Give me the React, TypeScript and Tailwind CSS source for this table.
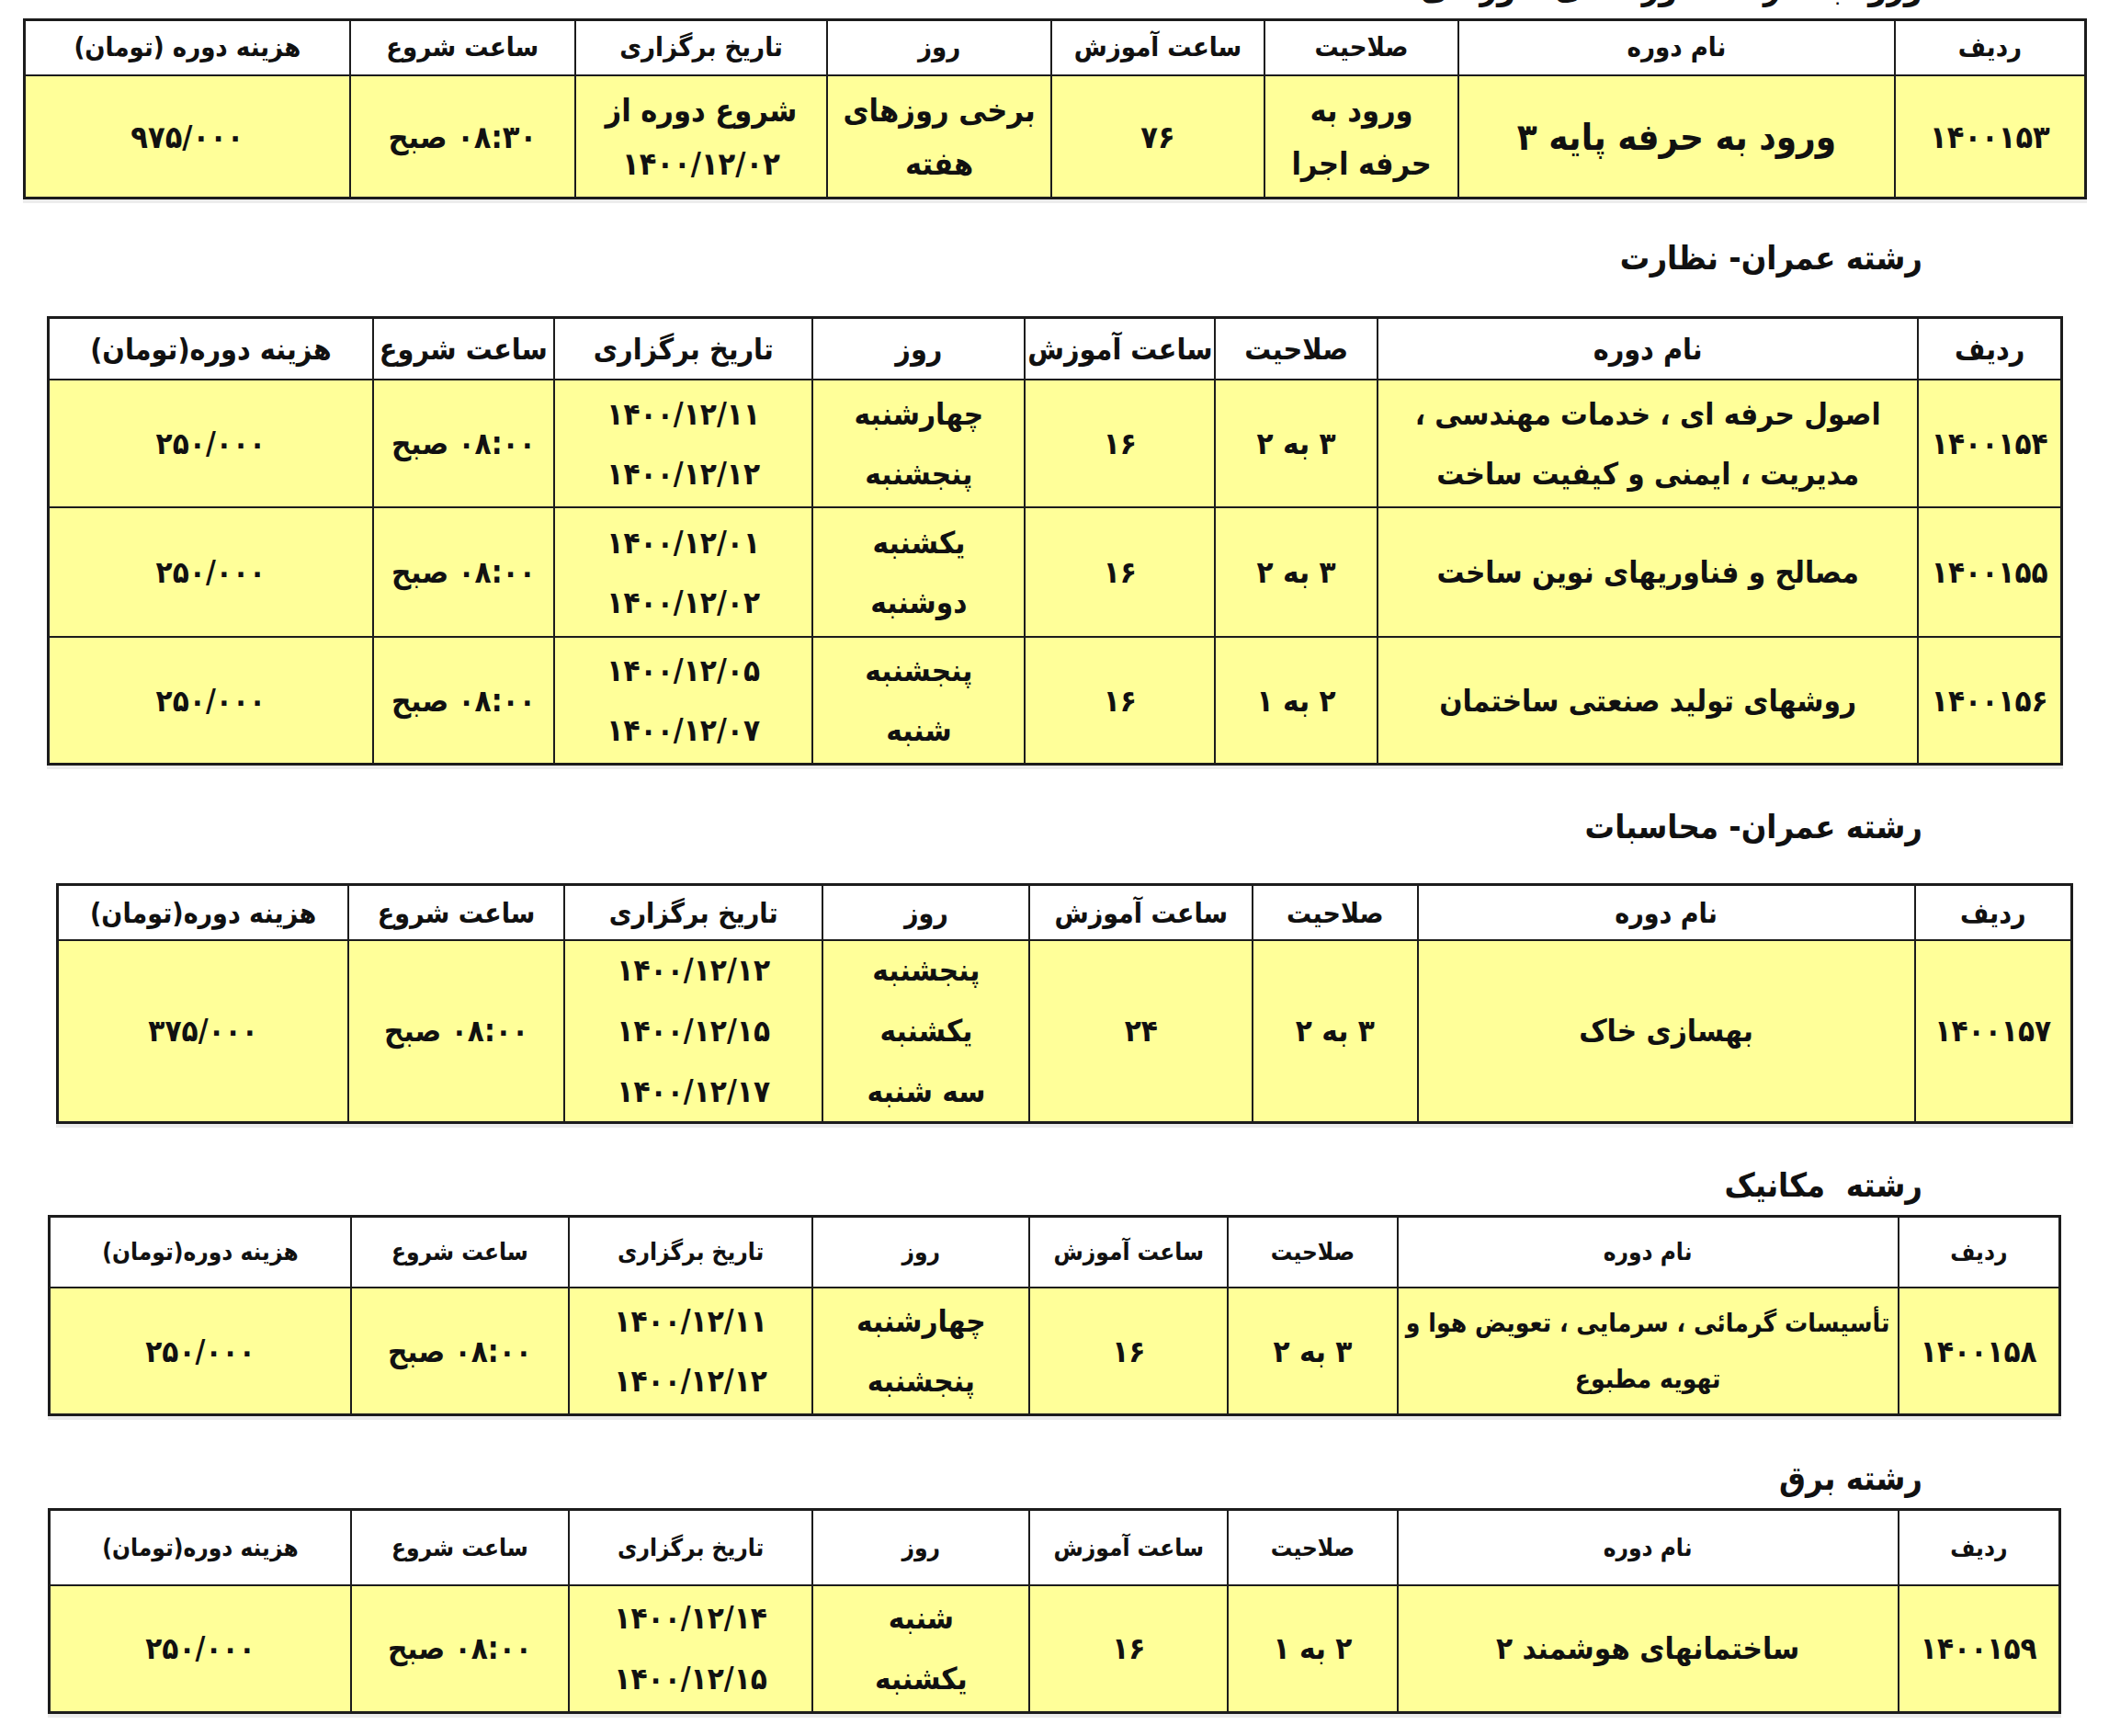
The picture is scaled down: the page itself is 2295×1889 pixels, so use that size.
import React from "react";

type Row = {
  code: string;
  name: string[];
  qual: string[];
  hours: string;
  days: string[];
  dates: string[];
  start: string;
  cost: string;
};

function Lines({ lines, cls }: { lines: string[]; cls: string }) {
  return (
    <div className={`bg-[#ffff99] flex flex-col items-center justify-center text-center whitespace-nowrap overflow-visible ${cls}`}>
      {lines.map((l, i) => (
        <div key={i}>{l}</div>
      ))}
    </div>
  );
}

function Table({
  gridCls,
  headCls,
  bodyCls,
  nameCls,
  costHead,
  rows,
}: {
  gridCls: string;
  headCls: string;
  bodyCls: string;
  nameCls: string;
  costHead: string;
  rows: Row[];
}) {
  const heads = ["ردیف", "نام دوره", "صلاحیت", "ساعت آموزش", "روز", "تاریخ برگزاری", "ساعت شروع", costHead];
  return (
    <div
      dir="rtl"
      className={`grid gap-[2px] bg-[#1c1c1c] border-[3px] border-[#1c1c1c] shadow-[0_4px_0_0_#ececec] ${gridCls}`}
    >
      {heads.map((h) => (
        <div key={h} className={`bg-white flex items-center justify-center text-center whitespace-nowrap ${headCls}`}>
          {h}
        </div>
      ))}
      {rows.map((r, i) => (
        <React.Fragment key={i}>
          <Lines lines={[r.code]} cls={bodyCls} />
          <Lines lines={r.name} cls={nameCls} />
          <Lines lines={r.qual} cls={bodyCls} />
          <Lines lines={[r.hours]} cls={bodyCls} />
          <Lines lines={r.days} cls={bodyCls} />
          <Lines lines={r.dates} cls={bodyCls} />
          <Lines lines={[r.start]} cls={bodyCls} />
          <Lines lines={[r.cost]} cls={bodyCls} />
        </React.Fragment>
      ))}
    </div>
  );
}

function Title({ text, cls }: { text: string; cls: string }) {
  return (
    <div dir="rtl" className={`h-[50px] leading-[50px] text-[36px] pr-[203px] text-right whitespace-pre ${cls}`}>
      {text}
    </div>
  );
}

const t1: Row[] = [
  {
    code: "۱۴۰۰۱۵۳",
    name: ["ورود به حرفه پایه ۳"],
    qual: ["ورود به", "حرفه اجرا"],
    hours: "۷۶",
    days: ["برخی روزهای", "هفته"],
    dates: ["شروع دوره از", "۱۴۰۰/۱۲/۰۲"],
    start: "۰۸:۳۰ صبح",
    cost: "۹۷۵/۰۰۰",
  },
];

const t2: Row[] = [
  {
    code: "۱۴۰۰۱۵۴",
    name: ["اصول حرفه ای ، خدمات مهندسی ،", "مدیریت ، ایمنی و کیفیت ساخت"],
    qual: ["۳ به ۲"],
    hours: "۱۶",
    days: ["چهارشنبه", "پنجشنبه"],
    dates: ["۱۴۰۰/۱۲/۱۱", "۱۴۰۰/۱۲/۱۲"],
    start: "۰۸:۰۰ صبح",
    cost: "۲۵۰/۰۰۰",
  },
  {
    code: "۱۴۰۰۱۵۵",
    name: ["مصالح و فناوریهای نوین ساخت"],
    qual: ["۳ به ۲"],
    hours: "۱۶",
    days: ["یکشنبه", "دوشنبه"],
    dates: ["۱۴۰۰/۱۲/۰۱", "۱۴۰۰/۱۲/۰۲"],
    start: "۰۸:۰۰ صبح",
    cost: "۲۵۰/۰۰۰",
  },
  {
    code: "۱۴۰۰۱۵۶",
    name: ["روشهای تولید صنعتی ساختمان"],
    qual: ["۲ به ۱"],
    hours: "۱۶",
    days: ["پنجشنبه", "شنبه"],
    dates: ["۱۴۰۰/۱۲/۰۵", "۱۴۰۰/۱۲/۰۷"],
    start: "۰۸:۰۰ صبح",
    cost: "۲۵۰/۰۰۰",
  },
];

const t3: Row[] = [
  {
    code: "۱۴۰۰۱۵۷",
    name: ["بهسازی خاک"],
    qual: ["۳ به ۲"],
    hours: "۲۴",
    days: ["پنجشنبه", "یکشنبه", "سه شنبه"],
    dates: ["۱۴۰۰/۱۲/۱۲", "۱۴۰۰/۱۲/۱۵", "۱۴۰۰/۱۲/۱۷"],
    start: "۰۸:۰۰ صبح",
    cost: "۳۷۵/۰۰۰",
  },
];

const t4: Row[] = [
  {
    code: "۱۴۰۰۱۵۸",
    name: ["تأسیسات گرمائی ، سرمایی ، تعویض هوا و", "تهویه مطبوع"],
    qual: ["۳ به ۲"],
    hours: "۱۶",
    days: ["چهارشنبه", "پنجشنبه"],
    dates: ["۱۴۰۰/۱۲/۱۱", "۱۴۰۰/۱۲/۱۲"],
    start: "۰۸:۰۰ صبح",
    cost: "۲۵۰/۰۰۰",
  },
];

const t5: Row[] = [
  {
    code: "۱۴۰۰۱۵۹",
    name: ["ساختمانهای هوشمند ۲"],
    qual: ["۲ به ۱"],
    hours: "۱۶",
    days: ["شنبه", "یکشنبه"],
    dates: ["۱۴۰۰/۱۲/۱۴", "۱۴۰۰/۱۲/۱۵"],
    start: "۰۸:۰۰ صبح",
    cost: "۲۵۰/۰۰۰",
  },
];

export default function App() {
  return (
    <div className="w-[2295px] min-h-[1889px] bg-white text-[#111] font-bold font-['DejaVu_Sans_Condensed','DejaVu_Sans',sans-serif] overflow-hidden">
      <div className="h-[20px] overflow-hidden">
        <div dir="rtl" className="-mt-[38px] h-[50px] leading-[50px] text-[36px] pr-[203px] text-right whitespace-nowrap">
          ورود به حرفه - دوره های آموزشی
        </div>
      </div>

      <div className="ml-[25px] w-[2246px]">
        <Table
          gridCls="grid-cols-[minmax(0,207fr)_minmax(0,477fr)_minmax(0,211fr)_minmax(0,232fr)_minmax(0,244fr)_minmax(0,275fr)_minmax(0,245fr)_minmax(0,355fr)] grid-rows-[58px_131px]"
          headCls="text-[29px]"
          bodyCls="text-[34px] leading-[58px]"
          nameCls="text-[40px] leading-[58px]"
          costHead="هزینه دوره (تومان)"
          rows={t1}
        />
      </div>

      <Title text="رشته عمران- نظارت" cls="mt-[39px]" />
      <div className="mt-[38px] ml-[51px] w-[2194px]">
        <Table
          gridCls="grid-cols-[minmax(0,155fr)_minmax(0,592fr)_minmax(0,176fr)_minmax(0,207fr)_minmax(0,231fr)_minmax(0,282fr)_minmax(0,197fr)_minmax(0,354fr)] grid-rows-[65px_137px_139px_136px]"
          headCls="text-[32px]"
          bodyCls="text-[33px] leading-[65px]"
          nameCls="text-[33px] leading-[65px]"
          costHead="هزینه دوره(تومان)"
          rows={t2}
        />
      </div>

      <Title text="رشته عمران- محاسبات" cls="mt-[42px]" />
      <div className="mt-[36px] ml-[61px] w-[2195px]">
        <Table
          gridCls="grid-cols-[minmax(0,170fr)_minmax(0,544fr)_minmax(0,179fr)_minmax(0,243fr)_minmax(0,225fr)_minmax(0,282fr)_minmax(0,235fr)_minmax(0,317fr)] grid-rows-[58px_196px]"
          headCls="text-[30px]"
          bodyCls="text-[33px] leading-[66px]"
          nameCls="text-[33px] leading-[66px]"
          costHead="هزینه دوره(تومان)"
          rows={t3}
        />
      </div>

      <Title text="رشته  مکانیک" cls="mt-[42px]" />
      <div className="mt-[7px] ml-[52px] w-[2191px]">
        <Table
          gridCls="grid-cols-[minmax(0,175fr)_minmax(0,548fr)_minmax(0,184fr)_minmax(0,216fr)_minmax(0,236fr)_minmax(0,266fr)_minmax(0,237fr)_minmax(0,329fr)] grid-rows-[75px_136px]"
          headCls="text-[26px]"
          bodyCls="text-[33px] leading-[65px]"
          nameCls="text-[28px] leading-[61px]"
          costHead="هزینه دوره(تومان)"
          rows={t4}
        />
      </div>

      <Title text="رشته برق" cls="mt-[43px]" />
      <div className="mt-[7px] ml-[52px] w-[2191px]">
        <Table
          gridCls="grid-cols-[minmax(0,175fr)_minmax(0,548fr)_minmax(0,184fr)_minmax(0,216fr)_minmax(0,236fr)_minmax(0,266fr)_minmax(0,237fr)_minmax(0,329fr)] grid-rows-[80px_136px]"
          headCls="text-[26px]"
          bodyCls="text-[33px] leading-[66px]"
          nameCls="text-[33px] leading-[66px]"
          costHead="هزینه دوره(تومان)"
          rows={t5}
        />
      </div>
    </div>
  );
}
